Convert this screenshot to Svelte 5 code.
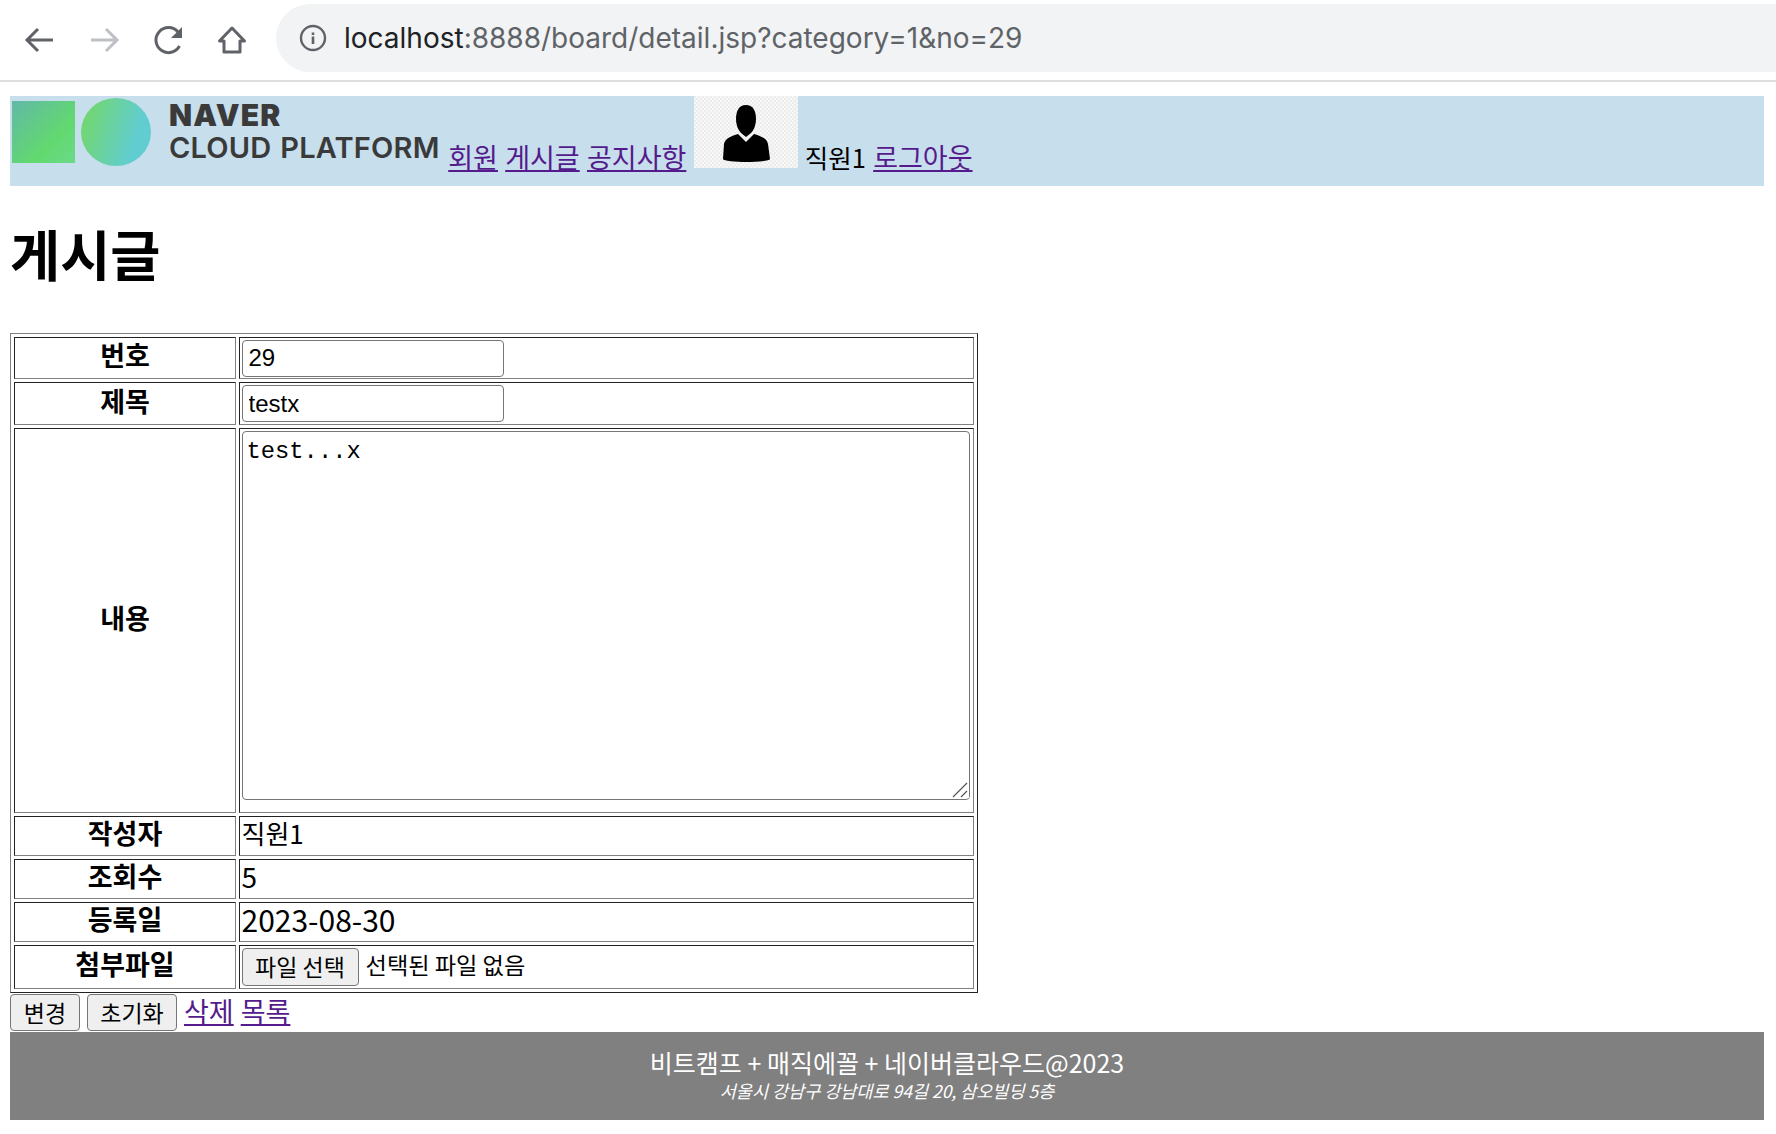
<script>
let rows = [
    { label: "작성자", value: "직원1", h: 33, cls: "writer" },
    { label: "조회수", value: "5", h: 33, cls: "hits" },
    { label: "등록일", value: "2023-08-30", h: 33.5, cls: "date" }
]
</script>

<nav class="toolbar">
    <div class="navBtns">
        <svg width="36" height="36" viewBox="0 0 36 36"><path d="M31 18H6M16 7 5 18l11 11" class="stroke" /></svg>
        <svg width="36" height="36" viewBox="0 0 36 36"><path d="M5 18h25M20 7l11 11-11 11" class="stroke off" /></svg>
        <svg width="36" height="36" viewBox="0 0 36 36"><path d="M29.500 24A12.500 12.500 0 1 1 28 10" class="stroke" /><path d="M32 5v11H21z" fill="#5f6368" /></svg>
        <svg width="36" height="36" viewBox="0 0 36 36"><path d="M18 6 5.500 19H10v11h16V19h4.500z" class="stroke thin" /></svg>
    </div>
    <div class="omnibox">
        <svg width="30" height="30" viewBox="0 0 30 30"><circle cx="15" cy="15" r="12" fill="none" stroke="#5f6368" stroke-width="2.400" /><path d="M13.700 9.500h2.600v2.500h-2.600zM13.700 13.500h2.600v7.500h-2.600z" fill="#5f6368" /></svg>
        <span class="url"><b>localhost</b>:8888/board/detail.jsp?category=1&amp;no=29</span>
    </div>
</nav>

<div class="page">
    <header>
        <svg class="logo" width="431" height="72" viewBox="0 0 431 72">
            <defs>
                <linearGradient id="sq" x1="0" y1="0" x2="1" y2="1">
                    <stop offset="0" stop-color="#62b8a6" />
                    <stop offset="0.65" stop-color="#62d96f" />
                    <stop offset="1" stop-color="#6cd98a" />
                </linearGradient>
                <linearGradient id="ci" x1="0" y1="0.3" x2="1" y2="0.6">
                    <stop offset="0.1" stop-color="#70d678" />
                    <stop offset="0.8" stop-color="#62cdd0" />
                </linearGradient>
            </defs>
            <rect x="2" y="5" width="63" height="62" fill="url(#sq)" />
            <ellipse cx="106" cy="36" rx="35" ry="34" fill="url(#ci)" />
            <text x="159" y="30" class="naver">NAVER</text>
            <text x="159" y="62" class="cloud">CLOUD PLATFORM</text>
        </svg>
        <a href="#a">회원</a>
        <a href="#b">게시글</a>
        <a href="#c">공지사항</a>
        <svg class="avatar" width="104" height="72" viewBox="0 0 104 72">
            <defs>
                <pattern id="chk" width="4" height="4" patternUnits="userSpaceOnUse">
                    <rect width="4" height="4" fill="#f7f7f7" />
                    <rect width="2" height="2" fill="#ececec" />
                    <rect x="2" y="2" width="2" height="2" fill="#ececec" />
                </pattern>
            </defs>
            <rect width="104" height="72" fill="url(#chk)" />
            <path d="M52 9c7 0 10 6 10 14 0 7-3 12-5 14l-5 4-5-4c-2-2-5-7-5-14 0-8 3-14 10-14z" fill="#000" />
            <path d="M44 38l8 8 8-8c6 2 13 4 14 10l2 15c0 2-14 3-24 3s-23-1-23-3l1-15c1-6 8-8 14-10z" fill="#000" />
        </svg>
        <span class="me">직원1</span>
        <a href="#d">로그아웃</a>
    </header>

    <h1>게시글</h1>

    <table>
        <colgroup>
            <col class="c1" />
            <col class="c2" />
        </colgroup>
        <tbody>
            <tr>
                <th style="height:35px">번호</th>
                <td><input type="text" value="29" readonly /></td>
            </tr>
            <tr>
                <th style="height:36px">제목</th>
                <td><input type="text" value="testx" readonly /></td>
            </tr>
            <tr>
                <th style="height:377.500px">내용</th>
                <td class="areaCell">
                    <div class="areaWrap">
                        <textarea readonly>test...x</textarea>
                        <svg class="grip" width="17" height="16" viewBox="0 0 17 16"><path d="M1 15 15 1M9 15l6-6" fill="none" stroke="#555" stroke-width="1.200" /></svg>
                    </div>
                </td>
            </tr>
            {#each rows as row}
                <tr>
                    <th style="height:{row.h}px">{row.label}</th>
                    <td class={row.cls}>{row.value}</td>
                </tr>
            {/each}
            <tr>
                <th style="height:37px">첨부파일</th>
                <td class="fileCell">
                    <button type="button" class="fileBtn">파일 선택</button>
                    <span class="noFile">선택된 파일 없음</span>
                </td>
            </tr>
        </tbody>
    </table>

    <div class="actions">
        <button type="button" class="b1">변경</button>
        <button type="button" class="b2">초기화</button>
        <a href="#e">삭제</a>
        <a href="#f">목록</a>
    </div>

    <footer>
        <div class="line1">비트캠프 + 매직에꼴 + 네이버클라우드@2023</div>
        <address>서울시 강남구 강남대로 94길 20, 삼오빌딩 5층</address>
    </footer>
</div>

<style>
:global(body) {
    background: #fff;
    color: #000;
    font-family: "Noto Sans CJK KR", "Noto Sans", sans-serif;
    font-size: 27px;
}

.toolbar {
    display: flex;
    align-items: center;
    height: 80px;
    border-bottom: 2px solid #dedede;
    background: #fff;
    overflow: hidden;
}

.navBtns {
    display: flex;
    gap: 28px;
    margin-left: 22px;
    width: 254px;
    flex: none;
}

.stroke {
    fill: none;
    stroke: #5f6368;
    stroke-width: 3;
}

.off {
    stroke: #bdc1c6;
}

.thin {
    stroke-linejoin: round;
}

.omnibox {
    flex: 1;
    display: flex;
    align-items: center;
    height: 68px;
    margin-top: -4px;
    padding-left: 22px;
    gap: 16px;
    background: #f1f3f4;
    border-radius: 34px 0 0 34px;
}

.url {
    font-family: Inter, "Noto Sans", sans-serif;
    font-size: 28px;
    color: #5f6368;
}

.url b {
    font-weight: 400;
    color: #202124;
}

.page {
    margin: 14px 12px 0 10px;
}

header {
    height: 90px;
    background: #c7deec;
    word-spacing: 1.200px;
    line-height: 72px;
}

.me {
    font-size: 25.500px;
}

.naver {
    font-family: Inter, sans-serif;
    font-size: 30px;
    font-weight: 900;
    fill: #3a3a3a;
    letter-spacing: 1.200px;
}

.cloud {
    font-family: Inter, sans-serif;
    font-size: 29px;
    font-weight: 600;
    fill: #3a3a3a;
    letter-spacing: 0.2px;
}

a {
    color: #551a8b;
    text-decoration: underline;
}

h1 {
    margin: 32px 0 45px;
    font-size: 54.500px;
    line-height: 70px;
    font-weight: 700;
}

table {
    width: 968px;
    table-layout: fixed;
    border-collapse: separate;
    border-spacing: 3px 3.200px;
    border: 1px solid;
    border-color: #808080 #222 #222 #808080;
}

.c1 {
    width: 222px;
}

th,
td {
    padding: 0 1.500px;
    border: 1px solid;
    border-color: #222 #808080 #808080 #222;
    line-height: 1.2;
}

th {
    font-weight: 700;
    text-align: center;
    padding-bottom: 5px;
    box-sizing: content-box;
}

.writer,
.hits,
.date {
    padding-bottom: 5px;
    line-height: 30px;
}

.writer {
    font-size: 26px;
}

.hits {
    font-size: 28px;
}

.date {
    font-size: 30px;
}

input {
    display: block;
    box-sizing: border-box;
    width: 262px;
    height: 37px;
    padding: 0 6px;
    border: 1px solid #767676;
    border-radius: 4px;
    font-family: "Liberation Sans", Arial, sans-serif;
    font-size: 24px;
    color: #000;
}

.areaCell {
    vertical-align: top;
    padding-top: 2px;
}

.areaWrap {
    position: relative;
    width: 728px;
}

textarea {
    display: block;
    box-sizing: border-box;
    width: 728px;
    height: 369px;
    padding: 6px 4px;
    border: 1px solid #767676;
    border-radius: 4px;
    font-family: "Liberation Mono", monospace;
    font-size: 23.800px;
    line-height: 27px;
    color: #000;
    resize: none;
}

.grip {
    position: absolute;
    right: 1px;
    bottom: 2px;
    background: #fff;
}

button {
    box-sizing: border-box;
    height: 37px;
    padding: 0 0 6px;
    border: 1px solid #767676;
    border-radius: 4px;
    background: #efefef;
    color: #000;
    font-family: "Noto Sans CJK KR", sans-serif;
    font-size: 23px;
}

.fileCell {
    white-space: nowrap;
}

.fileBtn {
    width: 117px;
    height: 38px;
    vertical-align: middle;
}

.noFile {
    display: inline-block;
    margin-left: 1px;
    padding-bottom: 4px;
    font-size: 23.200px;
    vertical-align: middle;
}

.actions {
    display: flex;
    align-items: center;
    gap: 7px;
    height: 39px;
}

.actions a {
    line-height: 34px;
    margin-top: -4px;
}

.b1 {
    width: 70px;
}

.b2 {
    width: 90px;
}

footer {
    height: 88px;
    background: #808080;
    color: #fff;
    text-align: center;
    padding-top: 13px;
    box-sizing: border-box;
}

.line1 {
    font-size: 25px;
    line-height: 34px;
}

address {
    font-size: 17.500px;
    line-height: 24px;
    font-style: italic;
}
</style>
